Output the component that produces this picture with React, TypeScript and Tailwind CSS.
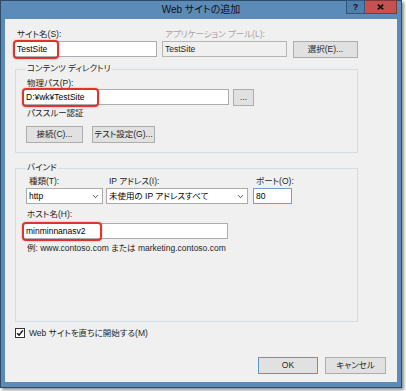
import { ChevronDown } from 'lucide-react'

const font = '[font-family:"Liberation_Sans","Noto_Sans_CJK_JP",sans-serif] [font-feature-settings:"palt"]'

function Label({ children, gray }: { children: React.ReactNode; gray?: boolean }) {
  return (
    <div className={`h-[11px] leading-[11px] pl-[3px] whitespace-nowrap ${gray ? 'text-[#a3a3a3]' : 'text-[#1e1e1e]'}`}>
      {children}
    </div>
  )
}

function Field({ value, className = '', mark }: { value: string; className?: string; mark?: number }) {
  return (
    <div className={`relative h-[16px] border border-[#abadb3] bg-white flex items-center pl-[2px] leading-none ${className}`}>
      {value}
      {/* 赤枠の注釈 */}
      {mark && (
        <span
          className="absolute -left-[2px] -top-[2px] h-[19px] rounded-[4px] border-2 border-[#e0332b] shadow-[0_0_2px_rgba(200,0,0,0.4)]"
          style={{ width: mark }}
        />
      )}
    </div>
  )
}

function Btn({ children, className = '', def }: { children: React.ReactNode; className?: string; def?: boolean }) {
  return (
    <div
      className={`h-[17px] flex items-center justify-center border bg-[#e1e1e1] text-[#1e1e1e] leading-none ${
        def ? 'border-[#5b97cf]' : 'border-[#adadad]'
      } ${className}`}
    >
      {children}
    </div>
  )
}

function Combo({ value, className = '' }: { value: string; className?: string }) {
  return (
    <div className={`h-[16px] border border-[#acacac] bg-white flex items-center pl-[2px] pr-[2px] leading-none ${className}`}>
      <span className="flex-1 whitespace-nowrap">{value}</span>
      <ChevronDown size={9} strokeWidth={2.2} className="text-[#333]" />
    </div>
  )
}

function Group({ title, className = '', children }: { title: string; className?: string; children: React.ReactNode }) {
  return (
    <div className={`ml-[1px] w-[343px] border border-[#d5dce3] flex flex-col ${className}`}>
      <div className="-mt-[7px] ml-[3px] self-start px-[1px] h-[11px] leading-[11px] bg-[#f0f0f0] text-[#1e1e1e]">
        {title}
      </div>
      {children}
    </div>
  )
}

export default function App() {
  return (
    <div className={`w-[406px] h-[391px] bg-white text-[8.5px] ${font}`}>
      {/* ウィンドウ */}
      <div className="w-[402px] h-[388px] border border-[#2f4a66] bg-[#5b8bb9] px-[4px] flex flex-col shadow-[2px_2px_3px_rgba(0,0,0,0.45)]">
        {/* タイトルバー */}
        <div className="h-[19px] flex items-start -mt-[1px]">
          <div className="w-[51px]" />
          <div className="flex-1 text-center text-[10px] leading-[20px] text-[#111]">Web サイトの追加</div>
          <div className="flex">
            <div className="w-[19px] h-[14px] bg-[#4f7fae] border border-[#34557a] flex items-center justify-center text-[9px] font-bold text-[#111] leading-none">
              ?
            </div>
            <div className="w-[32px] h-[14px] bg-[#c75050] border border-[#7a3a3a] border-l-0 flex items-center justify-center text-[#111]">
              <svg width="7" height="6" viewBox="0 0 7 6">
                <path d="M0.8 0.6 L6.2 5.4 M6.2 0.6 L0.8 5.4" stroke="#111" strokeWidth="1.6" />
              </svg>
            </div>
          </div>
        </div>

        {/* クライアント領域 */}
        <div className="h-[363px] bg-[#f0f0f0] pl-[9px] pt-[10px] flex flex-col">
          {/* サイト名 / アプリケーション プール */}
          <div className="flex">
            <div className="w-[143px] flex flex-col gap-[1px]">
              <Label>サイト名(S):</Label>
              <Field value="TestSite" mark={46} />
            </div>
            <div className="ml-[5px] w-[125px] flex flex-col gap-[1px]">
              <Label gray>アプリケーション プール(L):</Label>
              <div className="h-[16px] border border-[#b5b5b5] bg-[#f0f0f0] flex items-center pl-[2px] leading-none text-[#1e1e1e]">
                TestSite
              </div>
            </div>
            <div className="ml-[6px] w-[65px] flex flex-col gap-[1px]">
              <div className="h-[11px]" />
              <Btn>選択(E)...</Btn>
            </div>
          </div>

          {/* コンテンツ ディレクトリ */}
          <Group title="コンテンツ ディレクトリ" className="mt-[11px] h-[84px] pl-[7px]">
            <div className="mt-[4px] pl-[1px]">
              <Label>物理パス(P):</Label>
            </div>
            <div className="flex items-start">
              <Field value="D:¥wk¥TestSite" className="w-[206px]" mark={77} />
              <Btn className="ml-[4px] w-[21px]">...</Btn>
            </div>
            <div className="mt-[2px] pl-[1px]">
              <Label>パススルー認証</Label>
            </div>
            <div className="mt-[7px] ml-[3px] flex gap-[9px]">
              <Btn className="w-[57px]">接続(C)...</Btn>
              <Btn className="w-[63px]">テスト設定(G)...</Btn>
            </div>
          </Group>

          {/* バインド */}
          <Group title="バインド" className="mt-[15px] h-[154px] pl-[7px]">
            <div className="mt-[3px] flex">
              <div className="w-[80px] ml-[3px] flex flex-col gap-[1px]">
                <Label>種類(T):</Label>
                <Combo value="http" className="w-[77px]" />
              </div>
              <div className="w-[147px] flex flex-col gap-[1px]">
                <Label>IP アドレス(I):</Label>
                <Combo value="未使用の IP アドレスすべて" className="w-[142px]" />
              </div>
              <div className="flex flex-col gap-[1px]">
                <Label>ポート(O):</Label>
                <div className="w-[39px] h-[16px] border border-[#7a9cc4] bg-white flex items-center pl-[2px] leading-none">
                  80
                </div>
              </div>
            </div>
            <div className="mt-[5px] pl-[1px]">
              <Label>ホスト名(H):</Label>
            </div>
            <Field value="minminnanasv2" className="mt-[3px] w-[205px]" mark={80} />
            <div className="mt-[4px] pl-[1px]">
              <Label>例: www.contoso.com または marketing.contoso.com</Label>
            </div>
          </Group>

          {/* 直ちに開始 */}
          <div className="mt-[6px] ml-[1px] flex items-center gap-[4px] h-[10px]">
            <div className="w-[10px] h-[10px] border border-[#333] bg-white flex items-center justify-center">
              <svg width="8" height="8" viewBox="0 0 8 8">
                <path d="M1.2 4.2 L3.1 6.2 L6.9 1.4" fill="none" stroke="#111" strokeWidth="1.5" />
              </svg>
            </div>
            <span className="leading-none text-[#1e1e1e]">Web サイトを直ちに開始する(M)</span>
          </div>

          {/* OK / キャンセル */}
          <div className="mt-[19px] flex justify-end gap-[7px] pr-[11px]">
            <Btn def className="w-[60px]">OK</Btn>
            <Btn className="w-[61px]">キャンセル</Btn>
          </div>
        </div>
      </div>
    </div>
  )
}
